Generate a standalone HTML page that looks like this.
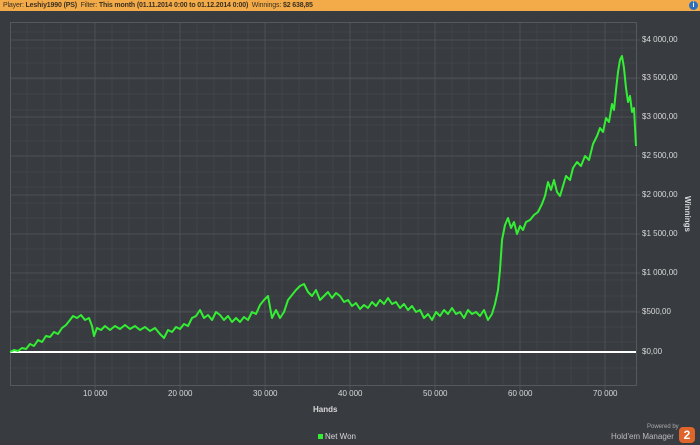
<!DOCTYPE html>
<html><head><style>
body{margin:0;width:700px;height:445px;background:#383b40;overflow:hidden;font-family:"Liberation Sans",sans-serif;position:relative}
.hdr{position:absolute;left:0;top:0;width:700px;height:11px;background:#f3ab4a;font-size:7px;line-height:11px;color:#3a3020;padding-left:3px;white-space:nowrap;letter-spacing:-0.15px}
.hdr b{font-weight:bold}
.t{position:absolute;color:#d8d8d8;font-size:8px}
</style></head><body>
<div class="hdr">Player: <b>Leshiy1990 (PS)</b> &nbsp;Filter: <b>This month (01.11.2014 0:00 to 01.12.2014 0:00)</b> &nbsp;Winnings: <b>$2 638,85</b></div>
<div style="position:absolute;left:689px;top:1px;width:9px;height:9px;border-radius:50%;background:#2c6fc0;color:#fff;font-size:7px;line-height:9px;text-align:center;font-weight:bold">i</div>
<svg width="700" height="445" style="position:absolute;left:0;top:0">
<g stroke="#414449" stroke-width="1">
<path d="M27 22V385M44 22V385M61 22V385M78 22V385M112 22V385M129 22V385M146 22V385M163 22V385M197 22V385M214 22V385M231 22V385M248 22V385M282 22V385M299 22V385M316 22V385M333 22V385M367 22V385M384 22V385M401 22V385M418 22V385M452 22V385M469 22V385M486 22V385M503 22V385M537 22V385M554 22V385M571 22V385M588 22V385M622 22V385"/>
<path d="M10 32H636M10 48H636M10 63H636M10 79H636M10 94H636M10 110H636M10 125H636M10 141H636M10 156H636M10 172H636M10 187H636M10 203H636M10 218H636M10 234H636M10 249H636M10 265H636M10 280H636M10 296H636M10 311H636M10 327H636M10 342H636M10 368H636"/>
</g>
<g stroke="#4d5055" stroke-width="1">
<path d="M95 22V390M180 22V390M265 22V390M350 22V390M435 22V390M520 22V390M605 22V390"/>
<path d="M10 40H640M10 78H640M10 117H640M10 156H640M10 195H640M10 234H640M10 273H640M10 312H640"/>
</g>
<rect x="10.5" y="22.5" width="626" height="363" fill="none" stroke="#55585d"/>
<line x1="10" y1="352" x2="636" y2="352" stroke="#fff" stroke-width="2"/>
<polyline fill="none" stroke="#33ee33" stroke-width="2" stroke-linejoin="round" points="10,352 14,350 18,351 22,348 26,349 30,344 34,346 38,340 42,342 46,336 50,337 54,332 58,334 62,328 66,325 70,320 73,316 77,318 81,315 85,320 89,318 92,326 94,336 97,328 101,330 105,326 110,330 115,326 120,329 125,325 130,329 135,326 140,330 145,327 150,331 155,328 160,334 164,338 168,330 172,332 176,327 180,329 184,324 188,326 192,318 196,316 200,310 204,318 208,315 212,320 216,312 220,315 224,320 228,316 232,322 236,318 240,322 244,317 248,320 252,312 256,314 260,305 264,300 268,296 272,318 276,310 280,318 284,312 288,300 292,295 296,290 300,286 304,284 308,292 312,296 316,290 320,300 324,296 328,292 332,298 336,293 340,296 344,302 348,300 352,306 356,303 360,309 364,305 368,308 372,302 376,306 380,300 384,304 388,298 392,304 396,302 400,308 404,304 408,310 412,306 416,312 420,310 424,318 428,314 432,320 436,312 440,316 444,310 448,314 452,308 456,314 460,312 464,318 468,310 472,314 476,312 480,316 484,310 488,320 492,314 495,304 498,290 500,270 502,240 505,225 508,218 511,228 514,222 517,234 520,226 523,230 526,222 530,220 534,215 538,212 542,204 545,196 548,182 551,190 554,180 557,192 560,196 563,186 566,176 570,180 573,168 577,162 581,166 585,156 589,160 593,144 597,136 600,128 603,132 606,118 609,122 612,104 614,110 616,90 618,72 620,60 622,56 624,68 626,88 628,102 630,96 632,112 634,108 636,146"/>
</svg>
<div class="t" style="left:642px;top:35px">$4 000,00</div>
<div class="t" style="left:642px;top:73px">$3 500,00</div>
<div class="t" style="left:642px;top:112px">$3 000,00</div>
<div class="t" style="left:642px;top:151px">$2 500,00</div>
<div class="t" style="left:642px;top:190px">$2 000,00</div>
<div class="t" style="left:642px;top:229px">$1 500,00</div>
<div class="t" style="left:642px;top:268px">$1 000,00</div>
<div class="t" style="left:642px;top:307px">$500,00</div>
<div class="t" style="left:642px;top:347px">$0,00</div>
<div class="t" style="left:83px;top:389px">10 000</div>
<div class="t" style="left:168px;top:389px">20 000</div>
<div class="t" style="left:253px;top:389px">30 000</div>
<div class="t" style="left:338px;top:389px">40 000</div>
<div class="t" style="left:423px;top:389px">50 000</div>
<div class="t" style="left:508px;top:389px">60 000</div>
<div class="t" style="left:593px;top:389px">70 000</div>
<div class="t" style="left:313px;top:405px;font-weight:bold">Hands</div>
<div class="t" style="top:196px;font-weight:bold;transform:rotate(90deg);transform-origin:left top;left:692px">Winnings</div>
<div style="position:absolute;left:318px;top:434px;width:5px;height:5px;background:#33ee33"></div>
<div class="t" style="left:325px;top:432px">Net Won</div>
<div class="t" style="left:647px;top:424px;font-size:6px;color:#aaa">Powered by</div>
<div class="t" style="left:611px;top:432px;font-size:8px;color:#bbb">Hold'em Manager</div>
<div style="position:absolute;left:679px;top:427px;width:16px;height:16px;background:#e0652a;border-radius:4px;color:#fff;font-weight:bold;font-size:12px;line-height:16px;text-align:center">2</div>
</body></html>
